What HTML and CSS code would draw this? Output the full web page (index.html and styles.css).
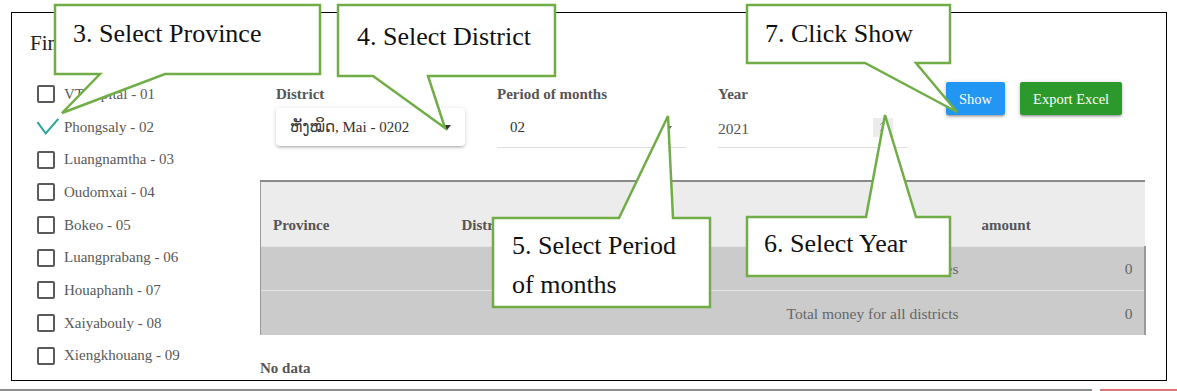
FILE: index.html
```html
<!DOCTYPE html>
<html lang="en">
<head>
<meta charset="utf-8">
<title>Report</title>
<link rel="stylesheet" href="styles.css">
</head>
<body>
<div class="page">
  <div class="frame">
    <aside class="sidebar">
      <h2 class="side-title">Find Province</h2>
      <ul class="prov-list">
        <li><span class="box"></span>VT capital - 01</li>
        <li><span class="box checked"><svg class="check" width="22" height="18" viewBox="0 0 22 18"><polyline points="0.5,4.2 8.7,15.5 21.3,0.8" fill="none" stroke="#26a69a" stroke-width="2"/></svg></span>Phongsaly - 02</li>
        <li><span class="box"></span>Luangnamtha - 03</li>
        <li><span class="box"></span>Oudomxai - 04</li>
        <li><span class="box"></span>Bokeo - 05</li>
        <li><span class="box"></span>Luangprabang - 06</li>
        <li><span class="box"></span>Houaphanh - 07</li>
        <li><span class="box"></span>Xaiyabouly - 08</li>
        <li><span class="box"></span>Xiengkhouang - 09</li>
        <li><span class="box"></span>Vientiane - 10</li>
      </ul>
    </aside>
    <main class="main">
      <div class="filters">
        <div class="field">
          <span class="field-label">District</span>
          <div class="select-box"><span class="lao">ຫັງໝິດ, Mai - 0202</span><span class="caret"></span></div>
        </div>
        <div class="field">
          <span class="field-label">Period of months</span>
          <div class="line-input period"><span>02</span><span class="mini-caret"></span></div>
        </div>
        <div class="field">
          <span class="field-label">Year</span>
          <div class="line-input year"><span>2021</span><span class="spinner"><svg width="20" height="19" viewBox="0 0 20 19"><polyline points="7,7 10,4 13,7" fill="none" stroke="#999" stroke-width="1"/><polyline points="7,12 10,15 13,12" fill="none" stroke="#999" stroke-width="1"/></svg></span></div>
        </div>
        <div class="actions">
          <button class="btn btn-blue">Show</button>
          <button class="btn btn-green">Export Excel</button>
        </div>
      </div>
      <table class="report">
        <colgroup><col class="c1"><col class="c2"><col class="c3"></colgroup>
        <thead>
          <tr class="head-spacer"><th></th><th></th><th></th></tr>
          <tr class="head-row"><th>Province</th><th>District</th><th>amount</th></tr>
        </thead>
        <tbody>
          <tr class="r1"><td colspan="2">Total money for all provinces</td><td>0</td></tr>
          <tr class="r2"><td colspan="2">Total money for all districts</td><td>0</td></tr>
        </tbody>
      </table>
      <div class="no-data">No data</div>
    </main>
  </div>
  <div class="bottom-strip"><span class="bar gray"></span><span class="bar pink"></span></div>

  <svg class="callouts" width="1177" height="391" viewBox="0 0 1177 391">
    <polygon points="55,5 320,5 320,74 165,74 62,113 100,74 55,74"/>
    <polygon points="338,5 555,5 555,76 428,76 445,128 373,76 338,76"/>
    <polygon points="747,5 950,5 950,63 916,63 957,112 865,63 747,63"/>
    <polygon points="493,218 619,218 668,116 673,218 710,218 710,307 493,307"/>
    <polygon points="747,217 866,217 885,115 916,217 950,217 950,276 747,276"/>
  </svg>
  <div class="callout-text t3">3. Select Province</div>
  <div class="callout-text t4">4. Select District</div>
  <div class="callout-text t7">7. Click Show</div>
  <div class="callout-text t5">5. Select Period<br>of months</div>
  <div class="callout-text t6">6. Select Year</div>
</div>
</body>
</html>
```
FILE: styles.css
```css
* { box-sizing: border-box; }

body {
  margin: 0;
  background: #fff;
  font-family: "Liberation Serif", "Times New Roman", serif;
}

.page {
  position: relative;
  width: 1177px;
  height: 391px;
  overflow: hidden;
  padding-top: 12px;
}

.frame {
  margin-left: 11px;
  width: 1156px;
  height: 369px;
  border: 1px solid #000;
  display: flex;
  overflow: hidden;
}

/* sidebar */
.sidebar {
  width: 248px;
  flex: none;
  padding: 18px 0 0 18px;
}

.side-title {
  margin: 0;
  font-size: 21px;
  font-weight: normal;
  line-height: 25px;
  color: #222;
}

.prov-list {
  list-style: none;
  margin: 22px 0 0;
  padding: 0 0 0 7px;
}

.prov-list li {
  height: 32.7px;
  display: flex;
  align-items: center;
  font-size: 15px;
  color: #595959;
  white-space: nowrap;
}

.box {
  width: 18px;
  height: 18px;
  border: 2px solid #5a5a5a;
  border-radius: 2px;
  margin-right: 9px;
  flex: none;
}

.box.checked {
  border: none;
  position: relative;
}

.check {
  position: absolute;
  left: 0;
  top: 0;
  overflow: visible;
}

/* main */
.main {
  flex: 1;
  padding-top: 69px;
}

.filters {
  display: flex;
  align-items: flex-start;
  padding-left: 16px;
  height: 66px;
}

.field {
  width: 189px;
  margin-right: 32px;
  flex: none;
}

.field-label {
  display: block;
  margin-top: 2px;
  height: 20px;
  line-height: 20px;
  font-size: 15px;
  font-weight: bold;
  color: #555;
}

.select-box {
  margin-top: 4px;
  height: 38px;
  border-radius: 4px;
  background: #fff;
  box-shadow: 0 2px 2px 0 rgba(0,0,0,.10), 0 3px 1px -2px rgba(0,0,0,.08), 0 1px 5px 0 rgba(0,0,0,.16);
  display: flex;
  align-items: center;
  justify-content: space-between;
  padding: 0 14px;
  font-size: 15px;
  color: #333;
}

.lao {
  font-family: "Liberation Serif", "DejaVu Serif", "DejaVu Sans", serif;
}

.caret {
  width: 0;
  height: 0;
  border-left: 4px solid transparent;
  border-right: 4px solid transparent;
  border-top: 5px solid #333;
}

.line-input {
  margin-top: 4px;
  height: 40px;
  border-bottom: 1px solid #ddd;
  display: flex;
  align-items: center;
  justify-content: space-between;
  font-size: 15px;
  color: #555;
}

.line-input.period {
  padding: 0 14px 0 13px;
  color: #333;
}

.mini-caret {
  width: 0;
  height: 0;
  border-left: 2px solid transparent;
  border-right: 2px solid transparent;
  border-top: 3px solid #666;
}

.line-input.year {
  padding: 2px 14px 0 0;
  font-size: 15.5px;
}

.spinner {
  width: 20px;
  height: 19px;
  margin-top: -2px;
  background: #ebebee;
  display: block;
}

.spinner svg { display: block; }

.actions {
  display: flex;
  gap: 15px;
  margin-left: 7px;
}

.btn {
  height: 33px;
  padding: 2px 13px 0;
  border: none;
  border-radius: 2px;
  color: #fff;
  font-family: inherit;
  font-size: 14.5px;
  box-shadow: 0 2px 2px 0 rgba(0,0,0,.14), 0 3px 1px -2px rgba(0,0,0,.12), 0 1px 5px 0 rgba(0,0,0,.2);
}

.btn-blue { background: #2196f3; }
.btn-green { background: #2b992b; }

/* table */
.report {
  margin-top: 32px;
  width: 884px;
  border-collapse: collapse;
  table-layout: fixed;
  border-top: 2px solid #8a8a8a;
}

.c1 { width: 189px; }
.c2 { width: 520px; }
.c3 { width: 175px; }

.report th {
  background: #ececec;
  text-align: left;
  font-size: 15px;
  font-weight: bold;
  color: #555;
  padding: 0 12px;
}

.report th:first-child,
.report td:first-child {
  border-left: 1px solid #9a9a9a;
}

.head-spacer th { height: 24px; }
.head-row th { height: 41px; }

.report td {
  background: #cbcbcb;
  border-top: 1px solid #e4e4e4;
  color: #666;
  font-size: 15.5px;
  text-align: right;
  padding: 2px 11px 0;
}

.report td:last-child {
  border-right: 2px solid #9a9a9a;
}

.r1 td { height: 44px; }
.r2 td { height: 45px; }

.no-data {
  margin-top: 23px;
  height: 20px;
  line-height: 20px;
  font-size: 15px;
  font-weight: bold;
  color: #555;
}

/* bottom strip */
.bottom-strip {
  display: flex;
  gap: 8px;
  margin-top: 8px;
  height: 2px;
}

.bar { display: block; height: 2px; }
.bar.gray { width: 1092px; background: #8c8c8c; }
.bar.pink { flex: 1; background: #e57373; }

/* callouts */
.callouts {
  position: absolute;
  left: 0;
  top: 0;
  pointer-events: none;
}

.callouts polygon {
  fill: #fff;
  stroke: #70ad47;
  stroke-width: 2.5;
  stroke-linejoin: miter;
}

.callout-text {
  position: absolute;
  font-family: "Liberation Serif", "Times New Roman", serif;
  font-size: 26px;
  line-height: 30px;
  color: #111;
  white-space: nowrap;
}

.t3 { left: 73px; top: 19px; }
.t4 { left: 357px; top: 22px; }
.t7 { left: 765px; top: 19px; }
.t6 { left: 764px; top: 229px; }
.t5 { left: 512px; top: 226px; line-height: 39px; }
```
